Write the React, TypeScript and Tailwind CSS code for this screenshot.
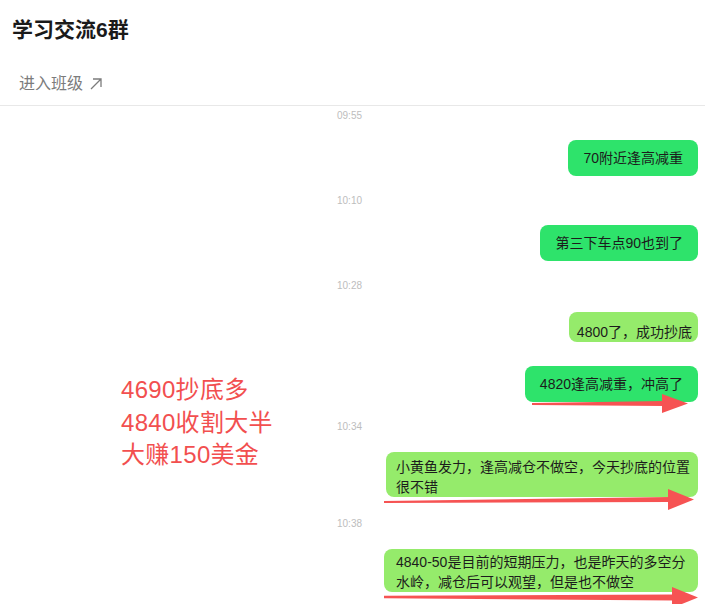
import React from "react";

const FONT = '"Liberation Sans", "Noto Sans CJK SC", sans-serif';

function Stamp({ time, mt }: { time: string; mt: string }) {
  return (
    <div className={`flex h-[14px] justify-center pr-[6px] text-[10px] leading-[16px] text-[#bdbdbd] ${mt}`}>
      {time}
    </div>
  );
}

function Bubble({
  children,
  mt,
  className,
}: {
  children: React.ReactNode;
  mt: string;
  className: string;
}) {
  return (
    <div className={`flex justify-end pr-[7px] ${mt}`}>
      <div className={`rounded-lg text-[14px] leading-[20px] text-[#1c1c1c] whitespace-nowrap ${className}`}>
        {children}
      </div>
    </div>
  );
}

// red annotation arrows drawn over the chat
function Arrows() {
  const arrows = [
    { x1: 532, y: 404, hx: 662, tip: 688, ht: 394, hb: 413, w0: 1, w1: 2.5 },
    { x1: 384, y: 502, hx: 668, tip: 694, ht: 489, hb: 510, w0: 1, w1: 2.5 },
    { x1: 384, y: 597, hx: 672, tip: 698, ht: 587, hb: 608, w0: 1.2, w1: 3 },
  ];
  return (
    <svg
      className="pointer-events-none absolute left-0 top-0"
      width={705}
      height={604}
      viewBox="0 0 705 604"
    >
      {arrows.map((a, i) => {
        const ty = (a.ht + a.hb) / 2;
        return (
          <g key={i} fill="#f65353">
            <polygon
              points={`${a.x1},${a.y - a.w0} ${a.hx + 2},${ty - a.w1} ${a.hx + 2},${ty + a.w1} ${a.x1},${a.y + a.w0}`}
            />
            <polygon points={`${a.hx},${a.ht} ${a.tip},${ty} ${a.hx},${a.hb}`} />
          </g>
        );
      })}
    </svg>
  );
}

export default function App() {
  return (
    <div className="relative h-[604px] w-[705px] overflow-hidden bg-white" style={{ fontFamily: FONT }}>
      <header className="h-[106px] border-b border-[#e8e8e8]">
        <h1 className="pl-[12px] pt-[16px] text-[21px] font-bold leading-[28px] text-[#1a1a1a]">
          学习交流6群
        </h1>
        <div className="mt-[29px] flex items-center gap-[7px] pl-[19px] text-[16px] leading-[22px] text-[#7c7c7c]">
          <span>进入班级</span>
          <svg width="12" height="12" viewBox="0 0 12 12" fill="none" stroke="#7c7c7c" strokeWidth="1.3">
            <path d="M1 11 11 1M3 1h8v8" />
          </svg>
        </div>
      </header>

      <main className="flex flex-col">
        <Stamp time="09:55" mt="mt-[2px]" />
        <Bubble mt="mt-[18px]" className="bg-[#2ee36b] px-[15px] py-2">
          70附近逢高减重
        </Bubble>
        <Stamp time="10:10" mt="mt-[17px]" />
        <Bubble mt="mt-[18px]" className="bg-[#2ee36b] px-[15px] py-2">
          第三下车点90也到了
        </Bubble>
        <Stamp time="10:28" mt="mt-[17px]" />
        <Bubble mt="mt-[20px]" className="h-[30px] overflow-hidden bg-[#95eb6b] pl-2 pr-[6px] pt-[10px]">
          4800了，成功抄底
        </Bubble>
        <Bubble mt="mt-[24px]" className="bg-[#2ee36b] px-[15px] py-2">
          4820逢高减重，冲高了
        </Bubble>
        <Stamp time="10:34" mt="mt-[17px]" />
        <Bubble mt="mt-[19px]" className="w-[312px] bg-[#95eb6b] pl-[10px] pt-[5px]">
          小黄鱼发力，逢高减仓不做空，今天抄底的位置
          <br />
          很不错
        </Bubble>
        <Stamp time="10:38" mt="mt-[19px]" />
        <Bubble mt="mt-[19px]" className="w-[314px] bg-[#95eb6b] pl-[12px] pt-[3px]">
          4840-50是目前的短期压力，也是昨天的多空分
          <br />
          水岭，减仓后可以观望，但是也不做空
        </Bubble>
      </main>

      <div className="absolute left-[121px] top-[374px] text-[24px] leading-[32.5px] tracking-[0.3px] text-[#f24f4f]">
        <div>4690抄底多</div>
        <div>4840收割大半</div>
        <div>大赚150美金</div>
      </div>

      <Arrows />
    </div>
  );
}
